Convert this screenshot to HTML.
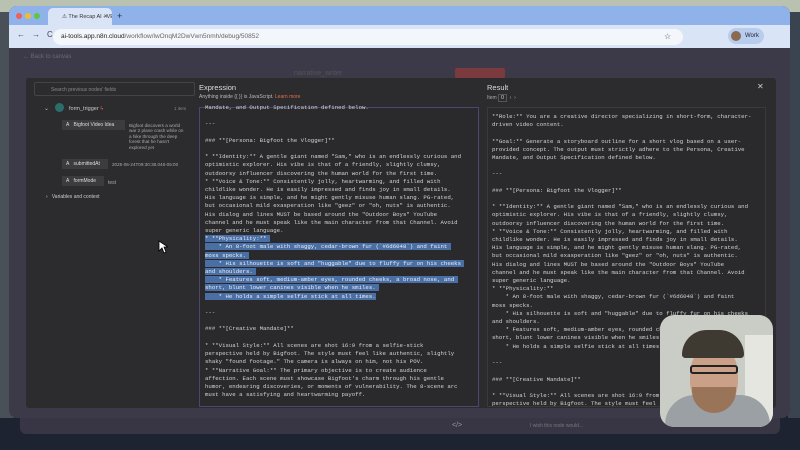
<!DOCTYPE html>
<html><head><style>
*{margin:0;padding:0;box-sizing:border-box}
body{width:800px;height:450px;overflow:hidden;background:#1c2230;font-family:"Liberation Sans",sans-serif;position:relative}
.abs{position:absolute;white-space:nowrap}
.mono{font-family:"Liberation Mono",monospace;font-size:5.7px;line-height:8.2px;color:#d4d4d4;white-space:pre}
.hl{background:#4a6fa5;color:#e8eef8}
</style></head><body>
<div class="abs" style="left:0;top:0;width:800px;height:12px;background:#b9c2b0"></div>
<div class="abs" style="left:0;top:12px;width:14px;height:420px;background:#4a5058"></div>
<div class="abs" style="left:788px;top:12px;width:12px;height:420px;background:#3a4450"></div>
<div class="abs" style="left:9px;top:6px;width:781px;height:412px;border-radius:8px;overflow:hidden;background:#3c3a48">
 <div class="abs" style="left:0;top:0;width:781px;height:19px;background:#8fb2ea"></div>
 <div class="abs" style="left:7px;top:7px;width:6px;height:6px;border-radius:50%;background:#ee5f57"></div>
 <div class="abs" style="left:16px;top:7px;width:6px;height:6px;border-radius:50%;background:#f3bc2f"></div>
 <div class="abs" style="left:25px;top:7px;width:6px;height:6px;border-radius:50%;background:#5fc63e"></div>
 <div class="abs" style="left:39px;top:2px;width:64px;height:17px;background:#d9e4f7;border-radius:5px 5px 0 0;overflow:hidden;font-size:5.5px;color:#333;padding:6px 0 0 14px">⚠ The Recap AI - VEO 3 Big<span style="position:absolute;right:4px;top:6px">✕</span></div>
 <div class="abs" style="left:108px;top:5px;font-size:9px;color:#234">+</div>
 <div class="abs" style="left:0;top:19px;width:781px;height:23px;background:#d9e4f7"></div>
 <div class="abs" style="left:8px;top:24px;font-size:8px;color:#445;letter-spacing:7px">←→C</div>
 <div class="abs" style="left:44px;top:23px;width:630px;height:16px;border-radius:8px;background:#f3f6fb"></div>
 <div class="abs" style="left:52px;top:27px;font-size:6.5px;color:#222">ai-tools.app.n8n.cloud<span style="color:#666">/workflow/lwOnqM2DwVwn5nmh/debug/50852</span></div>
 <div class="abs" style="left:655px;top:26px;font-size:8px;color:#445">☆</div>
 <div class="abs" style="left:719px;top:22px;width:36px;height:16px;border-radius:8px;background:#b8ccee;font-size:6px;color:#223;padding:5px 0 0 17px">Work</div>
 <div class="abs" style="left:722px;top:25px;width:10px;height:10px;border-radius:50%;background:#8a6a50"></div>
 <div class="abs" style="left:14px;top:48px;font-size:6px;color:#666a7a">← Back to canvas</div>
 <div class="abs" style="left:285px;top:64px;font-size:7px;color:#555">narrative_writer</div>
 <div class="abs" style="left:446px;top:62px;width:50px;height:10px;background:#7a3a3e;border-radius:2px"></div>
 <div class="abs" style="left:17px;top:72px;width:750px;height:330px;background:#2c2c2e;border-radius:3px"></div>
</div>
<div class="abs" style="left:0;top:418px;width:800px;height:32px;background:#1d2330"></div>
<div class="abs" style="left:20px;top:418px;width:760px;height:16px;background:#383645;border-radius:0 0 6px 6px"></div>
<div class="abs" style="left:452px;top:422px;font-size:7px;color:#999">&lt;/&gt;</div>
<div class="abs" style="left:530px;top:423px;font-size:5px;color:#777">I wish this node would...</div>
<div class="abs" style="left:34px;top:82px;width:161px;height:14px;border:1px solid #444;border-radius:2px;font-size:5px;color:#888;padding:4px 0 0 16px">Search previous nodes' fields</div>
<div class="abs" style="left:44px;top:105px;font-size:6px;color:#bbb">⌄</div>
<div class="abs" style="left:55px;top:103px;width:9px;height:9px;border-radius:50%;background:#2c6e6a"></div>
<div class="abs" style="left:69px;top:106px;font-size:5.5px;color:#ccc">form_trigger <span style="color:#e06050">ϟ</span></div>
<div class="abs" style="left:174px;top:106px;font-size:4.5px;color:#888">1 item</div>
<div class="abs" style="left:62px;top:120px;width:63px;height:10px;background:#3c3c3e;font-size:5px;color:#ddd;padding:2px 0 0 4px">A&nbsp;&nbsp; Bigfoot Video Idea</div>
<div class="abs" style="left:129px;top:123px;width:58px;white-space:normal;font-size:4.6px;line-height:5.4px;color:#aaa">Bigfoot discovers a world war 2 plane crash while on a hike through the deep forest that he hasn't explored yet</div>
<div class="abs" style="left:62px;top:159px;width:46px;height:10px;background:#3c3c3e;font-size:5px;color:#ddd;padding:2px 0 0 4px">A&nbsp;&nbsp; submittedAt</div>
<div class="abs" style="left:112px;top:162px;width:75px;white-space:normal;font-size:4.6px;line-height:5.4px;color:#aaa">2025-06-24T09:30:38.046-05:00</div>
<div class="abs" style="left:62px;top:176px;width:42px;height:10px;background:#3c3c3e;font-size:5px;color:#ddd;padding:2px 0 0 4px">A&nbsp;&nbsp; formMode</div>
<div class="abs" style="left:108px;top:180px;font-size:5px;color:#aaa">test</div>
<div class="abs" style="left:46px;top:194px;font-size:5px;color:#ccc">›&nbsp;&nbsp; Variables and context</div>
<svg class="abs" style="left:158px;top:240px" width="10" height="14"><path d="M1 1 L1 11 L4 8 L6 13 L8 12 L6 7 L10 7 Z" fill="#fff" stroke="#000" stroke-width=".8"/></svg>
<div class="abs" style="left:199px;top:83px;font-size:7.5px;color:#ddd">Expression</div>
<div class="abs" style="left:199px;top:94px;font-size:5px;color:#bbb">Anything inside {{ }} is JavaScript. <span style="color:#e0704a">Learn more</span></div>
<div class="abs" style="left:199px;top:107px;width:280px;height:300px;border:1px solid #4a4870;background:#2a2a2c;overflow:hidden"></div>
<div class="abs mono" style="left:205px;top:104px">Mandate, and Output Specification defined below.

---

### **[Persona: Bigfoot the Vlogger]**

* **Identity:** A gentle giant named "Sam," who is an endlessly curious and
optimistic explorer. His vibe is that of a friendly, slightly clumsy,
outdoorsy influencer discovering the human world for the first time.
* **Voice &amp; Tone:** Consistently jolly, heartwarming, and filled with
childlike wonder. He is easily impressed and finds joy in small details.
His language is simple, and he might gently misuse human slang. PG-rated,
but occasional mild exasperation like "geez" or "oh, nuts" is authentic.
His dialog and lines MUST be based around the "Outdoor Boys" YouTube
channel and he must speak like the main character from that Channel. Avoid
super generic language.
<span class="hl">* **Physicality:** </span>
<span class="hl">    * An 8-foot male with shaggy, cedar-brown fur (`#6d6048`) and faint </span>
<span class="hl">moss specks. </span>
<span class="hl">    * His silhouette is soft and "huggable" due to fluffy fur on his cheeks </span>
<span class="hl">and shoulders. </span>
<span class="hl">    * Features soft, medium-amber eyes, rounded cheeks, a broad nose, and </span>
<span class="hl">short, blunt lower canines visible when he smiles. </span>
<span class="hl">    * He holds a simple selfie stick at all times.</span>

---

### **[Creative Mandate]**

* **Visual Style:** All scenes are shot 16:9 from a selfie-stick
perspective held by Bigfoot. The style must feel like authentic, slightly
shaky "found footage." The camera is always on him, not his POV.
* **Narrative Goal:** The primary objective is to create audience
affection. Each scene must showcase Bigfoot's charm through his gentle
humor, endearing discoveries, or moments of vulnerability. The 8-scene arc
must have a satisfying and heartwarming payoff.</div>
<div class="abs" style="left:487px;top:83px;font-size:7.5px;color:#ddd">Result</div>
<div class="abs" style="left:757px;top:82px;font-size:8px;color:#ccc">✕</div>
<div class="abs" style="left:487px;top:95px;font-size:5px;color:#aaa">Item <span style="border:1px solid #555;padding:0 2px;color:#ddd">0</span> &nbsp;‹ &nbsp;›</div>
<div class="abs" style="left:487px;top:107px;width:279px;height:300px;border:1px solid #3a3a3c;background:#2a2a2c"></div>
<div class="abs mono" style="left:492px;top:113px">**Role:** You are a creative director specializing in short-form, character-
driven video content.

**Goal:** Generate a storyboard outline for a short vlog based on a user-
provided concept. The output must strictly adhere to the Persona, Creative
Mandate, and Output Specification defined below.

---

### **[Persona: Bigfoot the Vlogger]**

* **Identity:** A gentle giant named "Sam," who is an endlessly curious and
optimistic explorer. His vibe is that of a friendly, slightly clumsy,
outdoorsy influencer discovering the human world for the first time.
* **Voice &amp; Tone:** Consistently jolly, heartwarming, and filled with
childlike wonder. He is easily impressed and finds joy in small details.
His language is simple, and he might gently misuse human slang. PG-rated,
but occasional mild exasperation like "geez" or "oh, nuts" is authentic.
His dialog and lines MUST be based around the "Outdoor Boys" YouTube
channel and he must speak like the main character from that Channel. Avoid
super generic language.
* **Physicality:**
    * An 8-foot male with shaggy, cedar-brown fur (`#6d6048`) and faint
moss specks.
    * His silhouette is soft and "huggable" due to fluffy fur on his cheeks
and shoulders.
    * Features soft, medium-amber eyes, rounded cheeks, a broad nose, and
short, blunt lower canines visible when he smiles.
    * He holds a simple selfie stick at all times.

---

### **[Creative Mandate]**

* **Visual Style:** All scenes are shot 16:9 from a selfie-stick
perspective held by Bigfoot. The style must feel like authentic, slightly</div>
<div class="abs" style="left:660px;top:315px;width:113px;height:112px;border-radius:14px;overflow:hidden;background:#c9cdc6">
 <div class="abs" style="left:85px;top:20px;width:28px;height:92px;background:#e6e6e0"></div>
 <div class="abs" style="left:5px;top:80px;width:105px;height:40px;border-radius:30px 30px 0 0;background:#9aa0a4"></div>
 <div class="abs" style="left:30px;top:30px;width:48px;height:66px;border-radius:45%;background:#caa088"></div>
 <div class="abs" style="left:32px;top:72px;width:44px;height:26px;border-radius:0 0 22px 22px;background:#9a7458"></div>
 <div class="abs" style="left:22px;top:15px;width:62px;height:28px;border-radius:30px 30px 4px 4px;background:#3e3a32"></div>
 <div class="abs" style="left:30px;top:50px;width:48px;height:9px;border:2px solid #222;border-radius:3px"></div>
</div>
</body></html>
